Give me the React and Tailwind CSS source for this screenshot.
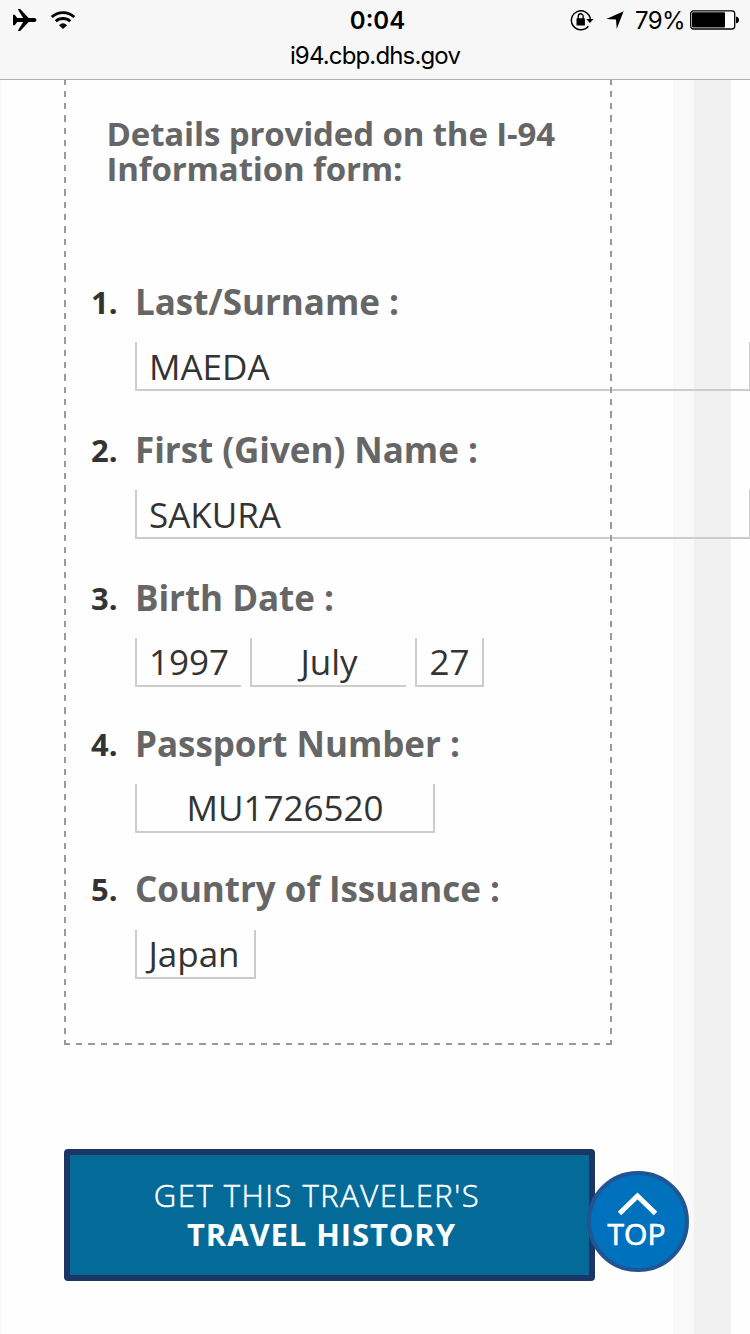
const Plane = () => (
  <svg className="block h-[24px] w-[26px]" viewBox="0 0 26 24" fill="#000">
    <path d="M1 6.800h1.800l2.400 3.200h6L6 1.600Q6 1 6.600 1h1.600l8.400 9H22.600q1.900.5 1.900 2t-1.900 2H16.600L8.200 23H6.600Q6 23 6 22.400l5.200-8.400h-6l-2.400 3.200H1z" />
  </svg>
);

const Wifi = () => (
  <svg className="block h-[20px] w-[26px]" viewBox="0 0 26 20" fill="none" stroke="#000">
    <path d="M1.800 7A16.500 16.500 0 0 1 24.200 7" strokeWidth="2.900" />
    <path d="M5.700 11.300A10.800 10.800 0 0 1 20.300 11.300" strokeWidth="2.900" />
    <path d="M9 15.200Q13 11.400 17 15.200L13 19z" fill="#000" stroke="none" />
  </svg>
);

const RotationLock = () => (
  <svg className="mr-[12px] block h-[24px] w-[24px]" viewBox="0 0 24 24" fill="none" stroke="#000">
    <path d="M18.300 18.300A9.500 9.500 0 1 1 20.300 11" strokeWidth="1.500" />
    <path d="M16.300 11h7.200L19.900 14.900z" fill="#000" stroke="none" />
    <rect x="6.500" y="10.300" width="8.400" height="7.200" rx=".6" fill="#000" stroke="none" />
    <path d="M8.300 11V8.300a2.400 2.600 0 0 1 4.800 0V11" strokeWidth="1.400" />
  </svg>
);

const LocationArrow = () => (
  <svg className="block h-[18px] w-[18px]" viewBox="0 0 18 18" fill="#000">
    <path d="M17.700.3 10.700 17.700 10 8.600.3 7.900z" />
  </svg>
);

const Battery = () => (
  <svg className="block h-[20px] w-[50px]" viewBox="0 0 50 20">
    <rect x=".7" y=".8" width="44" height="18.200" rx="2.800" fill="#fff" stroke="#000" strokeWidth="1.300" />
    <rect x="2" y="2.200" width="33" height="15.400" rx="1" fill="#000" />
    <path d="M46 6.500q3 .8 3 3.400t-3 3.400z" fill="#000" />
  </svg>
);

const StatusBar = () => (
  <header className="relative z-20 h-20 border-b border-[#b2b2b2] bg-[#f7f7f7] font-['Inter',sans-serif] text-2xl text-black">
    <div className="grid h-10 grid-cols-3 items-center">
      <div className="flex items-center gap-3 pl-3">
        <Plane />
        <Wifi />
      </div>
      <div className="pt-[2px] pl-[5px] text-center font-semibold">0:04</div>
      <div className="flex items-center justify-end pr-[10px]">
        <RotationLock />
        <LocationArrow />
        <span className="mr-[5px] ml-[11px] pt-[2px] tracking-[-0.600px]">79%</span>
        <Battery />
      </div>
    </div>
    <div className="pt-px text-center leading-[30px] tracking-[-0.850px]">i94.cbp.dhs.gov</div>
  </header>
);

const box = "h-[49px] shrink-0 border-b-2 border-l-2 border-[#ccc] text-center text-[35px] leading-[48px] text-[#333]";

const Row = ({ number, label, height, children }) => (
  <li className={`flex flex-col justify-end ${height}`}>
    <div className="flex h-full pl-[25px]">
      <span className="w-[44px] shrink-0 text-[31px] leading-[52px] font-bold text-[#333]">{number}.</span>
      <div className="flex shrink-0 flex-col">
        <div className="text-[35px] leading-[51px] font-bold tracking-[-0.040px] whitespace-nowrap text-[#666]">{label} :</div>
        <div className="mt-auto flex">{children}</div>
      </div>
    </div>
  </li>
);

export default function App() {
  return (
    <div className="h-[1334px] w-[750px] overflow-hidden bg-[#fefefe] font-['Open_Sans',sans-serif]">
      <StatusBar />
      <div className="flex h-[1254px]">
        <div className="w-[2px] bg-[#fafafa]" />
        <main className="relative z-10 w-[671px] shrink-0 pl-[62px]">
          <section className="flex h-[965px] w-[548px]">
            <div className="w-[2px] shrink-0 bg-[repeating-linear-gradient(to_bottom,#999_0_4.600px,transparent_4.600px_10.600px,#999_10.600px_12.333px)]" />
            <div className="flex w-[544px] shrink-0 flex-col">
              <h2 className="h-[196px] pt-[36px] pl-[40.500px] text-[33px] leading-[35px] font-bold tracking-[-0.140px] whitespace-nowrap text-[#666]">
                Details provided on the I-94
                <br />
                Information form:
              </h2>
              <ol className="flex h-[767px] flex-col">
                <Row number="1" label="Last/Surname" height="mb-[33px] h-[115px]">
                  <div className={`${box} w-[616px] border-r-2 pt-px pl-3`}><div className="text-left">MAEDA</div></div>
                </Row>
                <Row number="2" label="First (Given) Name" height="mb-[33px] h-[115px]">
                  <div className={`${box} w-[616px] border-r-2 pt-px pl-3`}><div className="text-left">SAKURA</div></div>
                </Row>
                <Row number="3" label="Birth Date" height="mb-[31px] h-[115px]">
                  <div className={`${box} mr-[9px] w-[106px]`}>1997</div>
                  <div className={`${box} mr-[9px] w-[156px]`}>July</div>
                  <div className={`${box} w-[69px] border-r-2`}>27</div>
                </Row>
                <Row number="4" label="Passport Number" height="mb-[30px] h-[115px]">
                  <div className={`${box} w-[300px] border-r-2`}>MU1726520</div>
                </Row>
                <Row number="5" label="Country of Issuance" height="h-[116px]">
                  <div className={`${box} w-[121px] border-r-2 pr-[3px]`}>Japan</div>
                </Row>
              </ol>
              <div className="h-[2px] bg-[repeating-linear-gradient(to_right,#999_0_4px,transparent_4px_10px,#999_10px_12.333px)]" />
            </div>
            <div className="w-[2px] shrink-0 bg-[repeating-linear-gradient(to_bottom,#999_0_4.600px,transparent_4.600px_10.600px,#999_10.600px_12.333px)]" />
          </section>
          <div className="mt-[104px] flex items-center">
            <button className="h-[132px] w-[531px] shrink-0 rounded-[4px] border-[6px] border-[#1b3664] bg-[#046b99] text-[31px] leading-[39px] text-white">
              <span className="block pr-[25px] font-light tracking-[1.500px] [-webkit-text-stroke:0.500px_white]">GET THIS TRAVELER'S</span>
              <span className="block pr-[16px] font-bold tracking-[0.900px]">TRAVEL HISTORY</span>
            </button>
            <button className="mt-[13px] -ml-[8px] flex h-[101px] w-[102px] shrink-0 flex-col items-center rounded-full border-4 border-[#205493] bg-[#0071bc] text-white">
              <svg className="mt-[17px] mr-[3px] block h-[24px] w-[40px]" viewBox="0 0 40 24" fill="none" stroke="#fff" strokeWidth="5">
                <path d="M2.500 21.500 20.500 4 38.500 21.500" />
              </svg>
              <span className="mt-px pr-[3px] text-[30px] leading-[34px] font-medium [-webkit-text-stroke:0.700px_white]">TOP</span>
            </button>
          </div>
        </main>
        <div className="w-[21px] bg-[#f9f9f9]" />
        <div className="w-[37px] bg-[#f1f1f1]" />
      </div>
    </div>
  );
}
